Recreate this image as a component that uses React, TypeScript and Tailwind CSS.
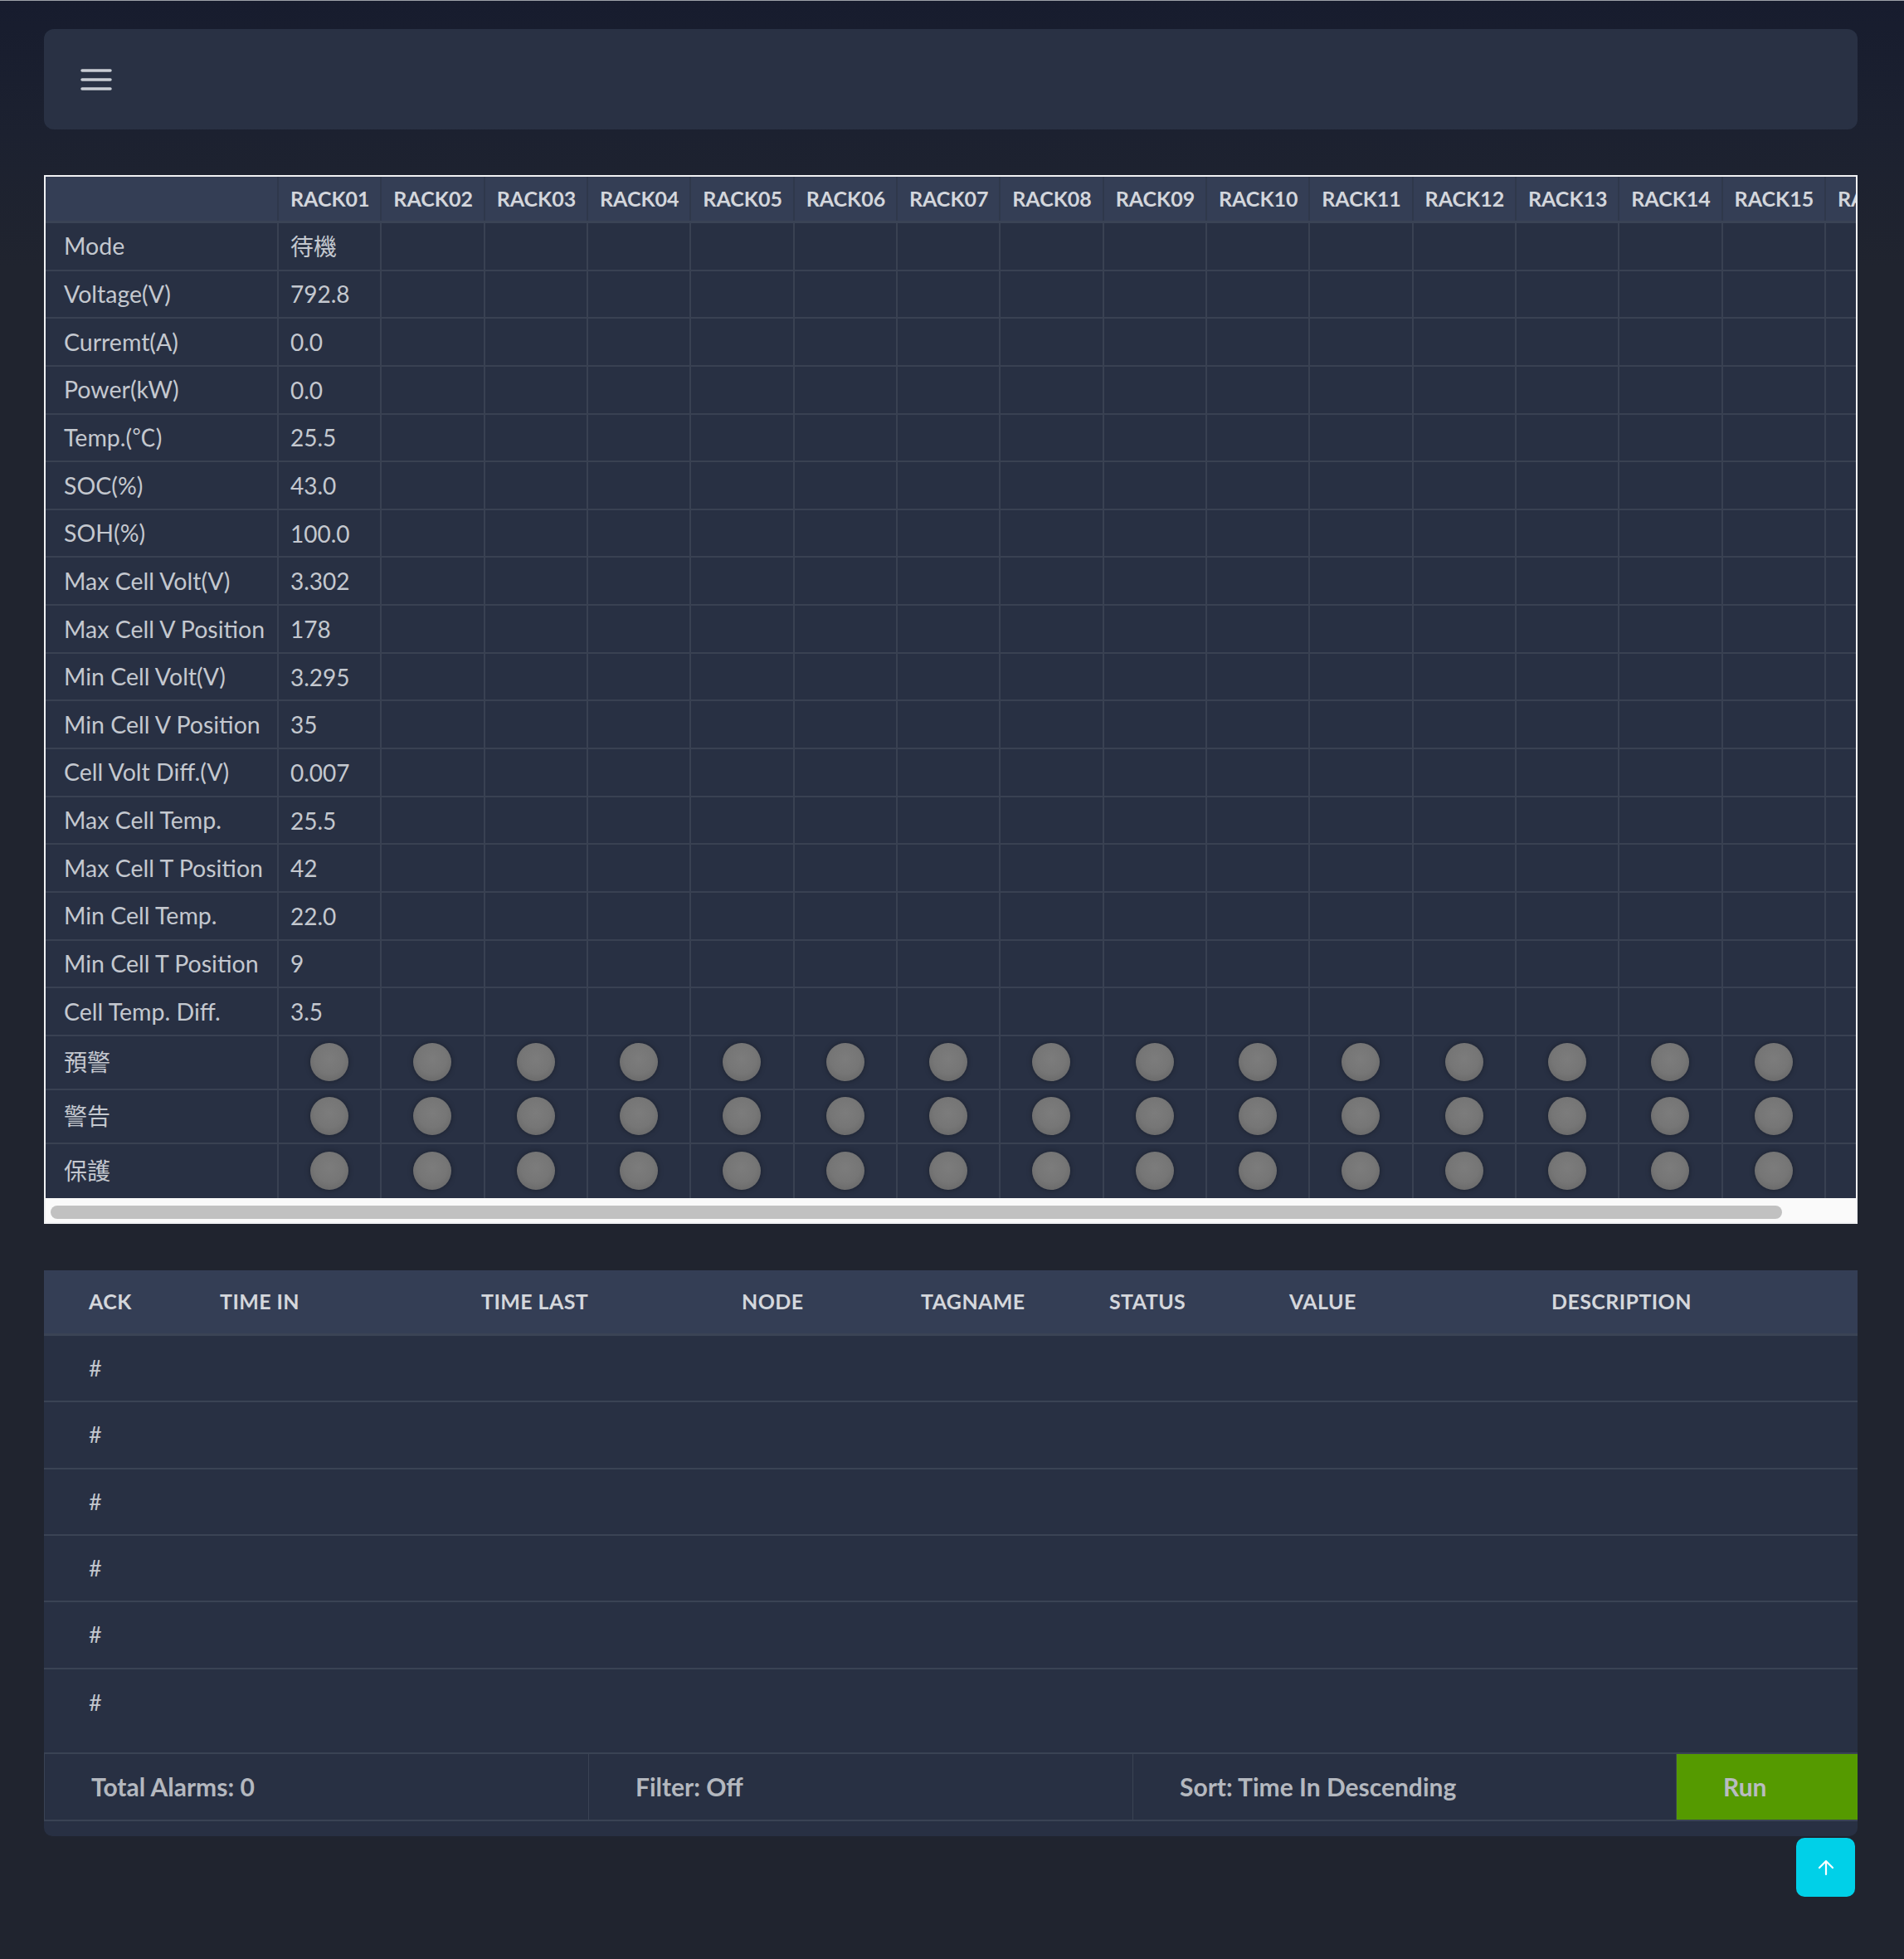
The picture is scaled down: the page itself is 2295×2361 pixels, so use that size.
import React from "react";

const FONT = '"Lato", "Noto Sans CJK TC", sans-serif';

const rows: [string, string][] = [
  ["Mode", "待機"],
  ["Voltage(V)", "792.8"],
  ["Curremt(A)", "0.0"],
  ["Power(kW)", "0.0"],
  ["Temp.(℃)", "25.5"],
  ["SOC(%)", "43.0"],
  ["SOH(%)", "100.0"],
  ["Max Cell Volt(V)", "3.302"],
  ["Max Cell V Position", "178"],
  ["Min Cell Volt(V)", "3.295"],
  ["Min Cell V Position", "35"],
  ["Cell Volt Diff.(V)", "0.007"],
  ["Max Cell Temp.", "25.5"],
  ["Max Cell T Position", "42"],
  ["Min Cell Temp.", "22.0"],
  ["Min Cell T Position", "9"],
  ["Cell Temp. Diff.", "3.5"],
];

const indicators = ["預警", "警告", "保護"];
const racks = Array.from({ length: 16 }, (_, i) => `RACK${String(i + 1).padStart(2, "0")}`);

const alarmCols = ["ACK", "TIME IN", "TIME LAST", "NODE", "TAGNAME", "STATUS", "VALUE", "DESCRIPTION"];

function Hamburger() {
  return (
    <svg width="38" height="30" viewBox="0 0 38 30" fill="none">
      <line x1="2" y1="4" x2="36" y2="4" stroke="#c9cdd4" strokeWidth="3.5" strokeLinecap="round" />
      <line x1="2" y1="15" x2="36" y2="15" stroke="#c9cdd4" strokeWidth="3.5" strokeLinecap="round" />
      <line x1="2" y1="26" x2="36" y2="26" stroke="#c9cdd4" strokeWidth="3.5" strokeLinecap="round" />
    </svg>
  );
}

function Lamp() {
  return (
    <div className="h-[46px] w-[46px] rounded-full bg-[radial-gradient(circle_at_50%_42%,#7c7c7c_0%,#767676_50%,#6a6a6a_80%,#555555_100%)] shadow-[0_0_6px_rgba(0,0,0,0.35)]" />
  );
}

export default function App() {
  return (
    <div
      className="min-h-[2361px] w-full border-t border-[#9ea2a9] bg-[linear-gradient(180deg,#171c2e_0px,#1c2130_160px,#20242f_320px,#20242f_100%)]"
      style={{ fontFamily: FONT }}
    >
      <div className="pl-[53px] pr-[56px] pt-[34px]">
        {/* Top bar */}
        <div className="flex h-[121px] items-center rounded-[12px] bg-[#293144] pl-[44px]">
          <Hamburger />
        </div>

        {/* Rack table */}
        <div className="mt-[55px] overflow-hidden border-2 border-[#f1f2f4] bg-[#fafafa]">
          <div className="w-[2182px] overflow-hidden">
            <div className="w-max">
              <div className="flex h-[56px] border-b-[3px] border-[#3a4355] bg-[#343e55]">
                <div className="w-[281px] shrink-0 border-r-2 border-[#2f384b]" />
                {racks.map((r) => (
                  <div
                    key={r}
                    className="flex w-[124.33px] shrink-0 items-center border-r-2 border-[#2f384b] pl-[14px] text-[25px] font-bold text-[#d3d6dc]"
                  >
                    {r}
                  </div>
                ))}
              </div>
              {rows.map(([label, v]) => (
                <div key={label} className="flex h-[57.65px] border-b-2 border-[#394152] bg-[#283043]">
                  <div className="flex w-[281px] shrink-0 items-center border-r-2 border-[#394152] pl-[22px] text-[28.5px] text-[#c4c8cf]">
                    {label}
                  </div>
                  {racks.map((r, i) => (
                    <div
                      key={r}
                      className="flex w-[124.33px] shrink-0 items-center border-r-2 border-[#394152] pl-[14px] text-[28px] text-[#c4c8cf]"
                    >
                      {i === 0 ? v : ""}
                    </div>
                  ))}
                </div>
              ))}
              {indicators.map((label, idx) => (
                <div
                  key={label}
                  className={`flex h-[65px] bg-[#283043] ${idx < 2 ? "border-b-2 border-[#394152]" : ""}`}
                >
                  <div className="flex w-[281px] shrink-0 items-center border-r-2 border-[#394152] pl-[22px] text-[28px] text-[#c4c8cf]">
                    {label}
                  </div>
                  {racks.map((r, i) => (
                    <div
                      key={r}
                      className="flex w-[124.33px] shrink-0 items-center justify-center border-r-2 border-[#394152]"
                    >
                      {i < 15 ? <Lamp /> : null}
                    </div>
                  ))}
                </div>
              ))}
            </div>
          </div>
          {/* scrollbar */}
          <div className="h-[29px] pt-[9px]">
            <div className="ml-[6px] h-[16px] w-[2087px] rounded-full bg-[#c1c1c1]" />
          </div>
        </div>

        {/* Alarm table */}
        <div className="mt-[56px] rounded-b-[10px] bg-[#283043] pb-[18px]">
          <div className="grid h-[79px] grid-cols-[158px_315px_314px_216px_227px_217px_316px_1fr] items-center border-b-[3px] border-[#3a4355] bg-[#343e55]">
            {alarmCols.map((c) => (
              <div key={c} className="pl-[54px] text-[25px] font-bold tracking-[0.4px] text-[#d4d7dc]">
                {c}
              </div>
            ))}
          </div>
          {Array.from({ length: 6 }).map((_, i) => (
            <div
              key={i}
              className={`flex h-[80.4px] items-center pl-[54px] text-[27px] text-[#c4c8cf] ${i < 5 ? "border-b-2 border-[#3a4354]" : ""}`}
            >
              #
            </div>
          ))}
          <div className="mt-[20px] grid h-[83px] grid-cols-[656px_656px_655px_1fr] border-y-2 border-l border-[#3a4354]">
            <div className="flex items-center border-r border-[#3a4354] pl-[56px] text-[30px] font-bold text-[#b4b8bf]">
              Total Alarms: 0
            </div>
            <div className="flex items-center border-r border-[#3a4354] pl-[56px] text-[30px] font-bold text-[#b4b8bf]">
              Filter: Off
            </div>
            <div className="flex items-center border-r border-[#3a4354] pl-[56px] text-[30px] font-bold text-[#b4b8bf]">
              Sort: Time In Descending
            </div>
            <div className="flex items-center bg-[#559a00] pl-[56px] text-[30px] font-bold text-[#b9bcc0]">Run</div>
          </div>
        </div>

        {/* scroll to top */}
        <div className="mt-[2px] flex justify-end pr-[3px]">
          <button className="flex h-[71px] w-[71px] items-center justify-center rounded-[10px] bg-[#00d0e8]">
            <svg width="22" height="22" viewBox="0 0 22 22" fill="none">
              <path d="M11 19V3M3 11l8-8 8 8" stroke="#ffffff" strokeWidth="2.2" strokeLinecap="round" strokeLinejoin="round" />
            </svg>
          </button>
        </div>
      </div>
    </div>
  );
}
